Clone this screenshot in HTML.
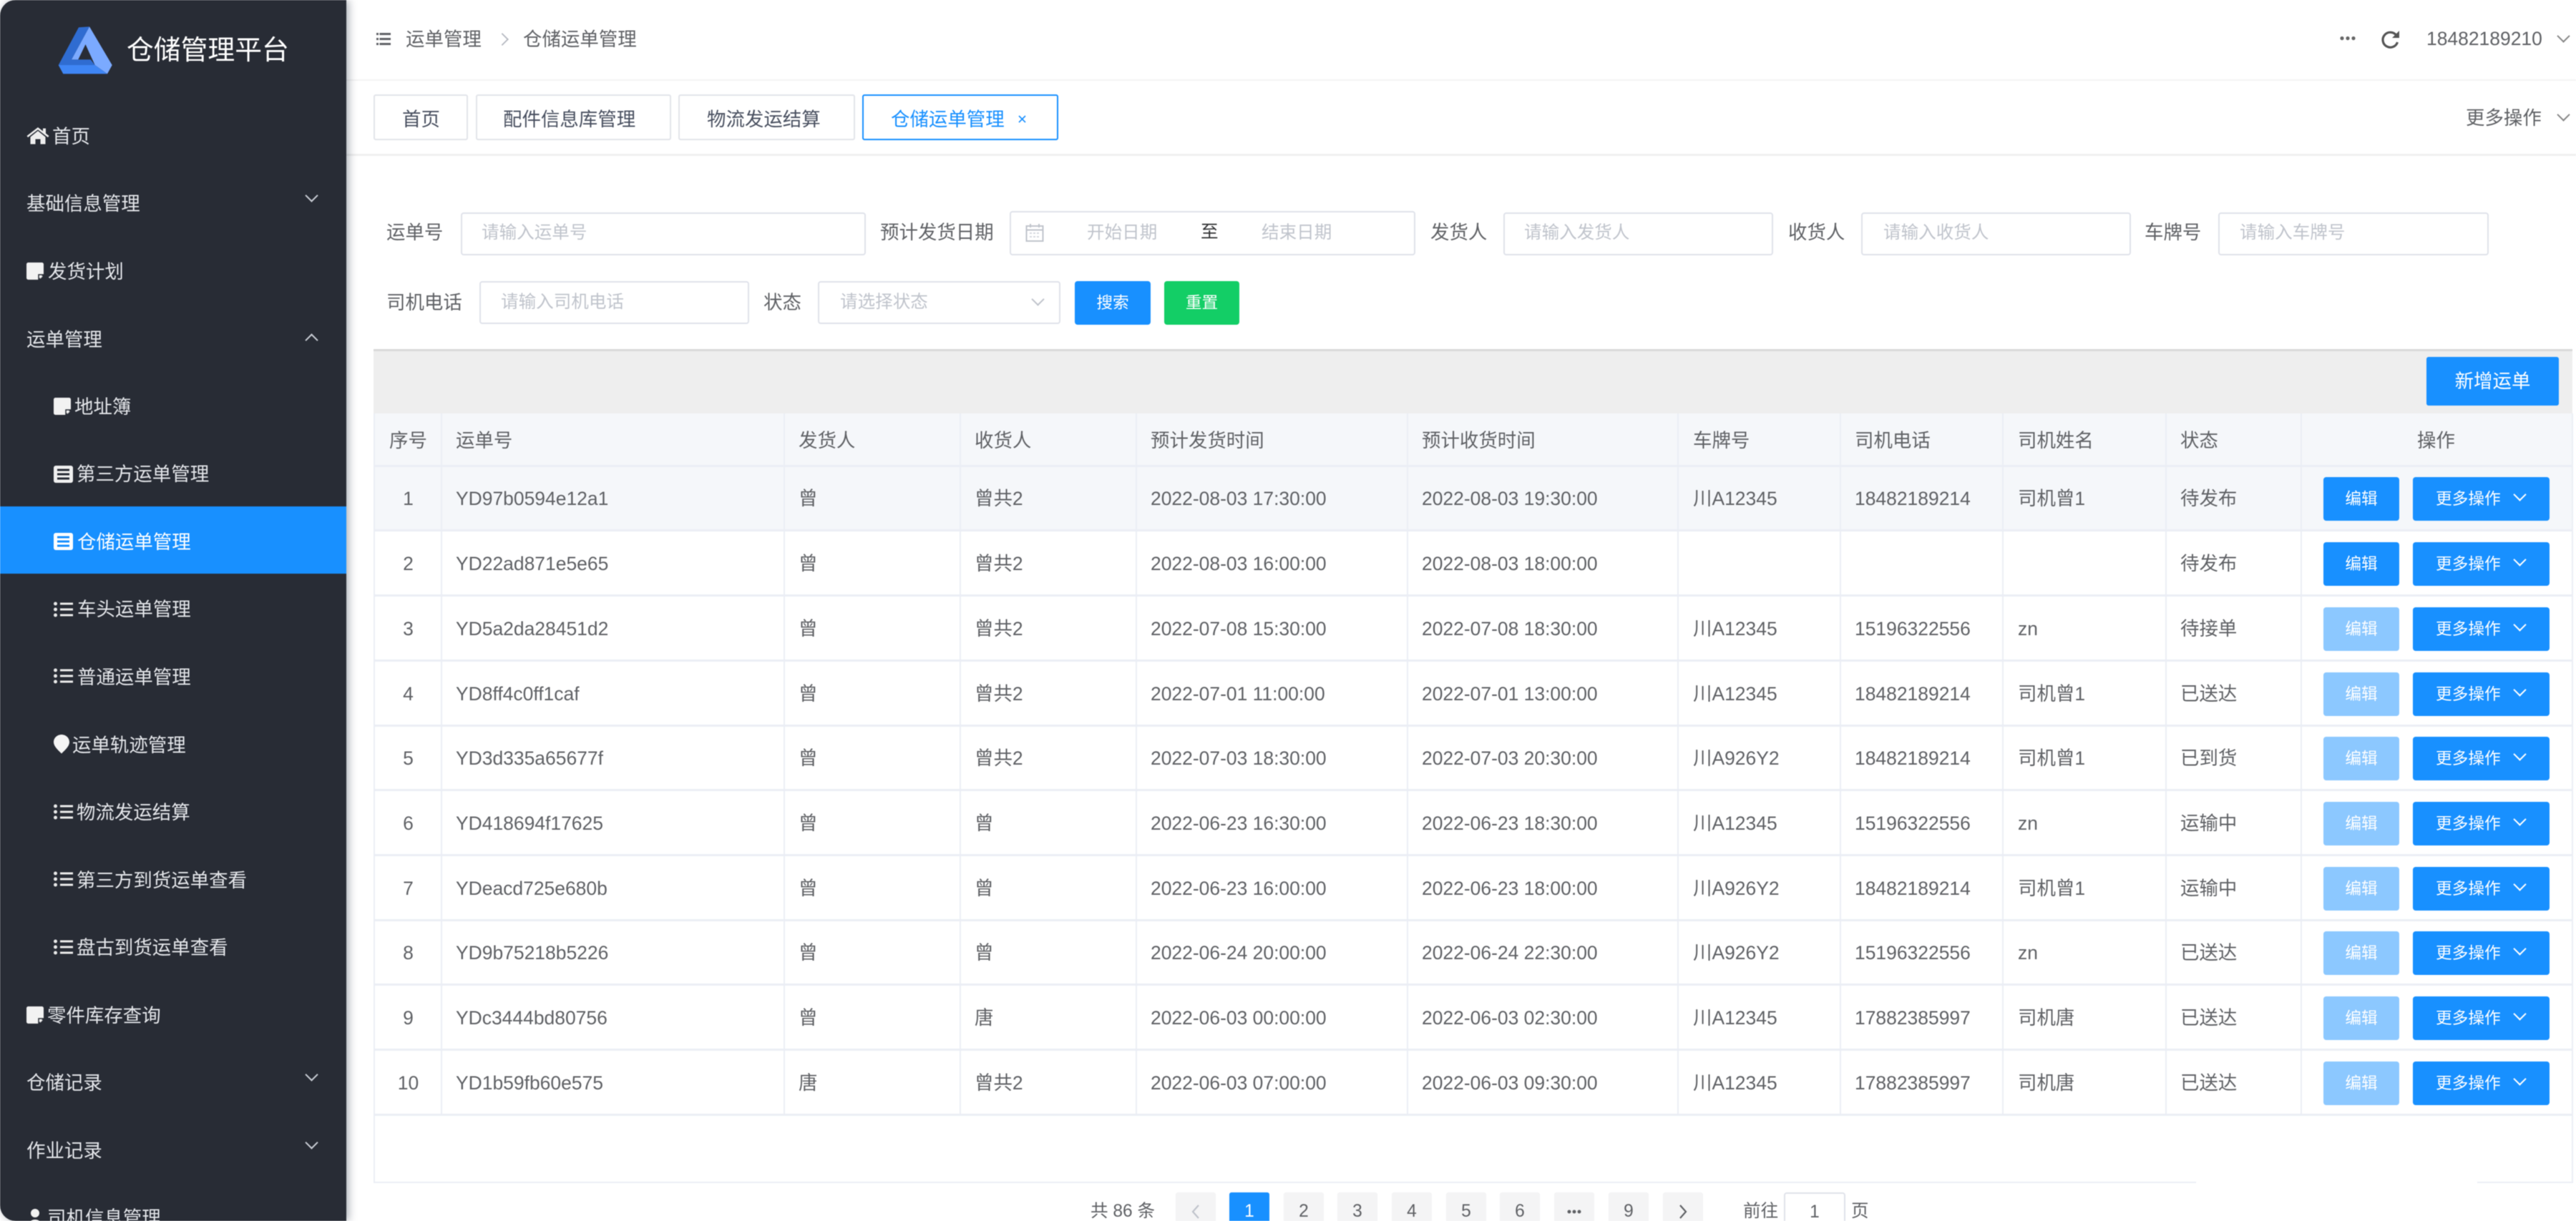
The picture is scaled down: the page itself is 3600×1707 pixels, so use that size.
<!DOCTYPE html>
<html lang="zh-CN">
<head>
<meta charset="utf-8">
<title>仓储运单管理</title>
<style>
html,body{margin:0;padding:0;background:#fff}
body{width:3600px;height:1707px;overflow:hidden;position:relative;font-family:"Liberation Sans","Noto Sans CJK SC",sans-serif;font-size:26.46px;color:#606266}
#w{position:absolute;left:0;top:0;width:3600px;height:1707px;overflow:hidden;filter:blur(.55px);background:#fff}
.a{position:absolute}
.t{position:absolute;white-space:nowrap;line-height:40px;height:40px}
.ch{position:absolute;width:13px;height:13px;border-right:2px solid currentColor;border-bottom:2px solid currentColor;transform:rotate(45deg);box-sizing:border-box}
.up{transform:rotate(225deg)}
#side{left:0;top:0;width:484px;height:1707px;background:#282c35;border-radius:22px 0 0 22px;box-shadow:3px 0 12px rgba(0,21,41,.35);color:#e4e6ea}
#side .t{margin-top:2px}
#side .ch{color:#c8ccd4;left:429px}
.act{left:0;top:708px;width:484px;height:94px;background:#1890ff}
.inp{position:absolute;box-sizing:border-box;border:2px solid #dfe2ea;border-radius:4px;background:#fff;height:60px}
.ph{color:#c0c4cc;font-size:24.57px}
.tab{position:absolute;top:132px;height:64px;box-sizing:border-box;border:2px solid #e2e4ea;border-radius:3px;background:#fff}
.vl{position:absolute;top:578px;height:982px;width:2px;background:#ebeef5}
.r{position:absolute;left:524px;width:3070px;height:91px;border-bottom:3px solid #ebeef5;box-sizing:border-box}
.r .t,.hd .t{top:25px}
.c0{left:0;width:93px;text-align:center}
.c1{left:113px}.c2{left:592px}.c3{left:838px}.c4{left:1084px}.c5{left:1463px}.c6{left:1842px}.c7{left:2068px}.c8{left:2296px}.c9{left:2523px}
.b{position:absolute;top:15px;height:61px;border-radius:4px;background:#1890ff;color:#fff;font-size:22.68px;line-height:61px}
.e{left:2723px;width:106px;text-align:center}
.off{background:#8cc8ff}
.m{left:2848px;width:191px;padding-left:32px;box-sizing:border-box}
.m .ch{left:143px;top:18px;color:#fff}
.p{position:absolute;top:1667px;width:56px;height:53px;background:#f4f4f5;border-radius:3px;text-align:center;line-height:54px;font-size:24.57px}
.p svg{position:absolute;left:21px;top:16px}
</style>
</head>
<body>
<div id="w">

<!-- top lines -->
<div class="a" style="left:484px;top:111px;width:3116px;height:2px;background:#f3f3f3"></div>
<div class="a" style="left:484px;top:215px;width:3116px;height:3px;background:#f0f0f0"></div>

<!-- header -->
<svg class="a" style="left:526px;top:46px" width="20" height="17" viewBox="0 0 20 17"><path d="M0 0h3v3H0zM4.500 0H20v3H4.500zM0 7h3v3H0zM4.500 7H20v3H4.500zM0 14h3v3H0zM4.500 14H20v3H4.500z" fill="#606266"/></svg>
<span class="t" style="left:567px;top:35px">运单管理</span>
<span class="a" style="left:695px;top:48px;width:12px;height:12px;border-right:2px solid #b4b8c0;border-top:2px solid #b4b8c0;transform:rotate(45deg) scale(.9)"></span>
<span class="t" style="left:731px;top:35px">仓储运单管理</span>

<svg class="a" style="left:3270px;top:49px" width="22" height="9" viewBox="0 0 22 9"><circle cx="3" cy="4.500" r="2.600" fill="#666"/><circle cx="11" cy="4.500" r="2.600" fill="#666"/><circle cx="19" cy="4.500" r="2.600" fill="#666"/></svg>
<svg class="a" style="left:3328px;top:41px" width="26" height="27" viewBox="0 0 26 27"><path d="M21 8.500A10.500 10.500 0 1 0 22.500 18" fill="none" stroke="#555" stroke-width="3.200"/><path d="M25 2v10H15z" fill="#555"/></svg>
<span class="t" style="left:3391px;top:34px">18482189210</span>
<span class="ch" style="left:3576px;top:44px;color:#888"></span>
<span class="t" style="left:3446px;top:145px">更多操作</span>
<span class="ch" style="left:3576px;top:154px;color:#888"></span>

<!-- tabs -->
<div class="tab" style="left:522px;width:132px"></div><span class="t" style="left:562px;top:147px;color:#495060">首页</span>
<div class="tab" style="left:665px;width:273px"></div><span class="t" style="left:703px;top:147px;color:#495060">配件信息库管理</span>
<div class="tab" style="left:948px;width:247px"></div><span class="t" style="left:988px;top:147px;color:#495060">物流发运结算</span>
<div class="tab" style="left:1205px;width:274px;border-color:#1890ff"></div><span class="t" style="left:1245px;top:147px;color:#1890ff">仓储运单管理</span>
<svg class="a" style="left:1422px;top:160px" width="13" height="13" viewBox="0 0 13 13"><path d="M2 2l9 9M11 2l-9 9" stroke="#1890ff" stroke-width="1.600"/></svg>

<!-- search row 1 -->
<span class="t" style="left:540px;top:305px">运单号</span>
<div class="inp" style="left:644px;top:297px;width:566px"></div><span class="t ph" style="left:673px;top:306px">请输入运单号</span>
<span class="t" style="left:1230px;top:305px">预计发货日期</span>
<div class="inp" style="left:1411px;top:295px;width:567px;height:62px"></div>
<svg class="a" style="left:1433px;top:312px" width="26" height="26" viewBox="0 0 26 26"><path d="M1.500 4h23v21h-23zM1.500 9.500h23" fill="none" stroke="#c0c4cc" stroke-width="2"/><path d="M7 1v5M19 1v5" stroke="#c0c4cc" stroke-width="2"/><path d="M6 14h14M6 19h14" stroke="#d5d8de" stroke-width="2" stroke-dasharray="3 2"/></svg>
<span class="t ph" style="left:1519px;top:306px">开始日期</span>
<span class="t" style="left:1678px;top:305px;color:#303133;font-size:24.57px">至</span>
<span class="t ph" style="left:1763px;top:306px">结束日期</span>
<span class="t" style="left:1999px;top:305px">发货人</span>
<div class="inp" style="left:2101px;top:297px;width:377px"></div><span class="t ph" style="left:2130px;top:306px">请输入发货人</span>
<span class="t" style="left:2499px;top:305px">收货人</span>
<div class="inp" style="left:2601px;top:297px;width:377px"></div><span class="t ph" style="left:2632px;top:306px">请输入收货人</span>
<span class="t" style="left:2997px;top:305px">车牌号</span>
<div class="inp" style="left:3100px;top:297px;width:378px"></div><span class="t ph" style="left:3130px;top:306px">请输入车牌号</span>

<!-- search row 2 -->
<span class="t" style="left:540px;top:403px">司机电话</span>
<div class="inp" style="left:670px;top:393px;width:377px"></div><span class="t ph" style="left:700px;top:403px">请输入司机电话</span>
<span class="t" style="left:1067px;top:403px">状态</span>
<div class="inp" style="left:1143px;top:393px;width:339px"></div><span class="t ph" style="left:1174px;top:403px">请选择状态</span>
<span class="ch" style="left:1444px;top:412px;color:#c0c4cc"></span>
<div class="a" style="left:1502px;top:393px;width:106px;height:61px;background:#1890ff;border-radius:4px;color:#fff;font-size:22.68px;line-height:61px;text-align:center">搜索</div>
<div class="a" style="left:1627px;top:393px;width:105px;height:61px;background:#13ce66;border-radius:4px;color:#fff;font-size:22.68px;line-height:61px;text-align:center">重置</div>

<!-- table -->
<div class="a" style="left:522px;top:488px;width:3073px;height:90px;background:#eee;border-top:3px solid #d9d9d9;box-sizing:border-box"></div>
<div class="a" style="left:3391px;top:499px;width:185px;height:68px;background:#1890ff;border-radius:3px;color:#fff;line-height:68px;text-align:center">新增运单</div>
<div class="a" style="left:522px;top:578px;width:3073px;height:74px;background:#f5f7fa"></div>
<div class="a" style="left:522px;top:652px;width:3073px;height:91px;background:#f5f7fa"></div>
<div class="a" style="left:522px;top:578px;width:2px;height:1076px;background:#ebeef5"></div>
<div class="a" style="left:3594px;top:578px;width:2px;height:1076px;background:#ebeef5"></div>
<div class="a" style="left:522px;top:1652px;width:2547px;height:2px;background:#ebeef5"></div>
<div class="a" style="left:3462px;top:1652px;width:134px;height:2px;background:#ebeef5"></div>
<div class="a" style="left:524px;top:650px;width:3070px;height:3px;background:#ebeef5"></div>

<div class="a hd" style="left:524px;top:578px;width:3070px;height:74px">
<span class="t" style="top:18px;left:0;width:93px;text-align:center">序号</span>
<span class="t c1" style="top:18px">运单号</span><span class="t c2" style="top:18px">发货人</span><span class="t c3" style="top:18px">收货人</span><span class="t c4" style="top:18px">预计发货时间</span><span class="t c5" style="top:18px">预计收货时间</span><span class="t c6" style="top:18px">车牌号</span><span class="t c7" style="top:18px">司机电话</span><span class="t c8" style="top:18px">司机姓名</span><span class="t c9" style="top:18px">状态</span>
<span class="t" style="top:18px;left:2691px;width:379px;text-align:center">操作</span>
</div>

<div class="r" style="top:652px"><span class="t c0">1</span><span class="t c1">YD97b0594e12a1</span><span class="t c2">曾</span><span class="t c3">曾共2</span><span class="t c4">2022-08-03 17:30:00</span><span class="t c5">2022-08-03 19:30:00</span><span class="t c6">川A12345</span><span class="t c7">18482189214</span><span class="t c8">司机曾1</span><span class="t c9">待发布</span><div class="b e">编辑</div><div class="b m">更多操作<i class="ch"></i></div></div>
<div class="r" style="top:743px"><span class="t c0">2</span><span class="t c1">YD22ad871e5e65</span><span class="t c2">曾</span><span class="t c3">曾共2</span><span class="t c4">2022-08-03 16:00:00</span><span class="t c5">2022-08-03 18:00:00</span><span class="t c9">待发布</span><div class="b e">编辑</div><div class="b m">更多操作<i class="ch"></i></div></div>
<div class="r" style="top:834px"><span class="t c0">3</span><span class="t c1">YD5a2da28451d2</span><span class="t c2">曾</span><span class="t c3">曾共2</span><span class="t c4">2022-07-08 15:30:00</span><span class="t c5">2022-07-08 18:30:00</span><span class="t c6">川A12345</span><span class="t c7">15196322556</span><span class="t c8">zn</span><span class="t c9">待接单</span><div class="b e off">编辑</div><div class="b m">更多操作<i class="ch"></i></div></div>
<div class="r" style="top:924.500px"><span class="t c0">4</span><span class="t c1">YD8ff4c0ff1caf</span><span class="t c2">曾</span><span class="t c3">曾共2</span><span class="t c4">2022-07-01 11:00:00</span><span class="t c5">2022-07-01 13:00:00</span><span class="t c6">川A12345</span><span class="t c7">18482189214</span><span class="t c8">司机曾1</span><span class="t c9">已送达</span><div class="b e off">编辑</div><div class="b m">更多操作<i class="ch"></i></div></div>
<div class="r" style="top:1015px"><span class="t c0">5</span><span class="t c1">YD3d335a65677f</span><span class="t c2">曾</span><span class="t c3">曾共2</span><span class="t c4">2022-07-03 18:30:00</span><span class="t c5">2022-07-03 20:30:00</span><span class="t c6">川A926Y2</span><span class="t c7">18482189214</span><span class="t c8">司机曾1</span><span class="t c9">已到货</span><div class="b e off">编辑</div><div class="b m">更多操作<i class="ch"></i></div></div>
<div class="r" style="top:1106px"><span class="t c0">6</span><span class="t c1">YD418694f17625</span><span class="t c2">曾</span><span class="t c3">曾</span><span class="t c4">2022-06-23 16:30:00</span><span class="t c5">2022-06-23 18:30:00</span><span class="t c6">川A12345</span><span class="t c7">15196322556</span><span class="t c8">zn</span><span class="t c9">运输中</span><div class="b e off">编辑</div><div class="b m">更多操作<i class="ch"></i></div></div>
<div class="r" style="top:1196.500px"><span class="t c0">7</span><span class="t c1">YDeacd725e680b</span><span class="t c2">曾</span><span class="t c3">曾</span><span class="t c4">2022-06-23 16:00:00</span><span class="t c5">2022-06-23 18:00:00</span><span class="t c6">川A926Y2</span><span class="t c7">18482189214</span><span class="t c8">司机曾1</span><span class="t c9">运输中</span><div class="b e off">编辑</div><div class="b m">更多操作<i class="ch"></i></div></div>
<div class="r" style="top:1287px"><span class="t c0">8</span><span class="t c1">YD9b75218b5226</span><span class="t c2">曾</span><span class="t c3">曾</span><span class="t c4">2022-06-24 20:00:00</span><span class="t c5">2022-06-24 22:30:00</span><span class="t c6">川A926Y2</span><span class="t c7">15196322556</span><span class="t c8">zn</span><span class="t c9">已送达</span><div class="b e off">编辑</div><div class="b m">更多操作<i class="ch"></i></div></div>
<div class="r" style="top:1378px"><span class="t c0">9</span><span class="t c1">YDc3444bd80756</span><span class="t c2">曾</span><span class="t c3">唐</span><span class="t c4">2022-06-03 00:00:00</span><span class="t c5">2022-06-03 02:30:00</span><span class="t c6">川A12345</span><span class="t c7">17882385997</span><span class="t c8">司机唐</span><span class="t c9">已送达</span><div class="b e off">编辑</div><div class="b m">更多操作<i class="ch"></i></div></div>
<div class="r" style="top:1469px"><span class="t c0">10</span><span class="t c1">YD1b59fb60e575</span><span class="t c2">唐</span><span class="t c3">曾共2</span><span class="t c4">2022-06-03 07:00:00</span><span class="t c5">2022-06-03 09:30:00</span><span class="t c6">川A12345</span><span class="t c7">17882385997</span><span class="t c8">司机唐</span><span class="t c9">已送达</span><div class="b e off">编辑</div><div class="b m">更多操作<i class="ch"></i></div></div>

<i class="vl" style="left:616px"></i><i class="vl" style="left:1095px"></i><i class="vl" style="left:1341px"></i><i class="vl" style="left:1587px"></i><i class="vl" style="left:1966px"></i><i class="vl" style="left:2344px"></i><i class="vl" style="left:2571px"></i><i class="vl" style="left:2798px"></i><i class="vl" style="left:3026px"></i><i class="vl" style="left:3215px"></i>

<!-- pagination -->
<span class="t" style="left:1524px;top:1674px;font-size:24.57px">共 86 条</span>
<div class="p" style="left:1643px"><svg width="14" height="22" viewBox="0 0 14 22"><path d="M11 2L3 11l8 9" fill="none" stroke="#c0c4cc" stroke-width="2.200"/></svg></div>
<div class="p" style="left:1718px;background:#1890ff;color:#fff">1</div>
<div class="p" style="left:1794px">2</div>
<div class="p" style="left:1869px">3</div>
<div class="p" style="left:1945px">4</div>
<div class="p" style="left:2021px">5</div>
<div class="p" style="left:2096px">6</div>
<div class="p" style="left:2172px"><svg style="left:18px;top:23px" width="20" height="8" viewBox="0 0 20 8"><circle cx="3" cy="4" r="2.500" fill="#606266"/><circle cx="10" cy="4" r="2.500" fill="#606266"/><circle cx="17" cy="4" r="2.500" fill="#606266"/></svg></div>
<div class="p" style="left:2248px">9</div>
<div class="p" style="left:2324px"><svg width="14" height="22" viewBox="0 0 14 22"><path d="M3 2l8 9-8 9" fill="none" stroke="#606266" stroke-width="2.200"/></svg></div>
<span class="t" style="left:2436px;top:1674px;font-size:24.57px">前往</span>
<div class="inp" style="left:2493px;top:1667px;width:86px;height:60px;text-align:center;line-height:52px;font-size:24.57px">1</div>
<span class="t" style="left:2587px;top:1674px;font-size:24.57px">页</span>

<!-- sidebar -->
<div class="a" id="side">
<svg class="a" style="left:0;top:0" width="180" height="120" viewBox="0 0 180 120">
<polygon points="110,38.300 125,37.300 100,83.300 126.700,83.300 132.700,91 81.700,91" fill="#2f6cd1"/>
<polygon points="125,37.300 156.700,91 150,103.300 132.700,91 119.500,62 109.300,83.300 100,83.300" fill="#7baaff"/>
<polygon points="81.700,91 132.700,91 150,103.300 88.300,103.300" fill="#3f86f5"/>
</svg>
<span class="t" style="left:177px;top:46px;height:46px;line-height:46px;font-size:37.800px;color:#fff">仓储管理平台</span>

<!-- home -->
<svg class="a" style="left:37px;top:177px" width="32" height="25" viewBox="0 0 32 25"><path d="M16 6L5.500 14.500V24.500h7v-7h7v7h7V14.500z" fill="#eee"/><path d="M0.500 13L16 1l7 5.400V2.500h4v7l4.500 3.500-1.600 2L16 4.200 2.100 15z" fill="#eee"/></svg>
<span class="t" style="left:73px;top:169px">首页</span>

<span class="t" style="left:37px;top:263px">基础信息管理</span><i class="ch" style="top:267px"></i>

<svg class="a" style="left:37px;top:367px" width="24" height="24" viewBox="0 0 24 24"><rect width="24" height="24" rx="2.500" fill="#f2f2f2"/><path d="M24 16l-8 8h8z" fill="#282c35"/><path d="M17 23.500V17h6.500" fill="none" stroke="#282c35" stroke-width="1.500"/><path d="M19 23v-4h4z" fill="#f2f2f2"/></svg>
<span class="t" style="left:67px;top:358px">发货计划</span>

<span class="t" style="left:37px;top:453px">运单管理</span><i class="ch up" style="top:469px"></i>

<svg class="a" style="left:75px;top:556px" width="24" height="24" viewBox="0 0 24 24"><rect width="24" height="24" rx="2.500" fill="#f2f2f2"/><path d="M24 16l-8 8h8z" fill="#282c35"/><path d="M17 23.500V17h6.500" fill="none" stroke="#282c35" stroke-width="1.500"/><path d="M19 23v-4h4z" fill="#f2f2f2"/></svg>
<span class="t" style="left:104px;top:547px">地址簿</span>

<svg class="a" style="left:75px;top:651px" width="27" height="24" viewBox="0 0 27 24"><rect width="27" height="24" rx="3" fill="#f0f0f0"/><path d="M5 6h17M5 12h17M5 18h17" stroke="#282c35" stroke-width="3"/></svg>
<span class="t" style="left:107px;top:641px">第三方运单管理</span>

<div class="a act"></div>
<svg class="a" style="left:75px;top:745px" width="27" height="24" viewBox="0 0 27 24"><rect width="27" height="24" rx="3" fill="#fff"/><path d="M5 6h17M5 12h17M5 18h17" stroke="#1890ff" stroke-width="3"/></svg>
<span class="t" style="left:108px;top:736px;color:#fff">仓储运单管理</span>

<svg class="a" style="left:75px;top:841px" width="27" height="22" viewBox="0 0 27 22"><g fill="#e8e8e8"><circle cx="2.500" cy="3" r="2.500"/><circle cx="2.500" cy="11" r="2.500"/><circle cx="2.500" cy="19" r="2.500"/><rect x="9" y="1.500" width="18" height="3"/><rect x="9" y="9.500" width="18" height="3"/><rect x="9" y="17.500" width="18" height="3"/></g></svg>
<span class="t" style="left:108px;top:830px">车头运单管理</span>

<svg class="a" style="left:75px;top:934px" width="27" height="22" viewBox="0 0 27 22"><g fill="#e8e8e8"><circle cx="2.500" cy="3" r="2.500"/><circle cx="2.500" cy="11" r="2.500"/><circle cx="2.500" cy="19" r="2.500"/><rect x="9" y="1.500" width="18" height="3"/><rect x="9" y="9.500" width="18" height="3"/><rect x="9" y="17.500" width="18" height="3"/></g></svg>
<span class="t" style="left:108px;top:925px">普通运单管理</span>

<svg class="a" style="left:75px;top:1027px" width="22" height="27" viewBox="0 0 22 27"><path d="M11 0C5 0 0 4.500 0 10.500c0 6 7 12 11 16 4-4 11-10 11-16C22 4.500 17 0 11 0z" fill="#f5f5f5"/></svg>
<span class="t" style="left:101px;top:1020px">运单轨迹管理</span>

<svg class="a" style="left:75px;top:1124px" width="27" height="22" viewBox="0 0 27 22"><g fill="#e8e8e8"><circle cx="2.500" cy="3" r="2.500"/><circle cx="2.500" cy="11" r="2.500"/><circle cx="2.500" cy="19" r="2.500"/><rect x="9" y="1.500" width="18" height="3"/><rect x="9" y="9.500" width="18" height="3"/><rect x="9" y="17.500" width="18" height="3"/></g></svg>
<span class="t" style="left:107px;top:1114px">物流发运结算</span>

<svg class="a" style="left:75px;top:1218px" width="27" height="22" viewBox="0 0 27 22"><g fill="#e8e8e8"><circle cx="2.500" cy="3" r="2.500"/><circle cx="2.500" cy="11" r="2.500"/><circle cx="2.500" cy="19" r="2.500"/><rect x="9" y="1.500" width="18" height="3"/><rect x="9" y="9.500" width="18" height="3"/><rect x="9" y="17.500" width="18" height="3"/></g></svg>
<span class="t" style="left:107px;top:1209px">第三方到货运单查看</span>

<svg class="a" style="left:75px;top:1313px" width="27" height="22" viewBox="0 0 27 22"><g fill="#e8e8e8"><circle cx="2.500" cy="3" r="2.500"/><circle cx="2.500" cy="11" r="2.500"/><circle cx="2.500" cy="19" r="2.500"/><rect x="9" y="1.500" width="18" height="3"/><rect x="9" y="9.500" width="18" height="3"/><rect x="9" y="17.500" width="18" height="3"/></g></svg>
<span class="t" style="left:107px;top:1303px">盘古到货运单查看</span>

<svg class="a" style="left:37px;top:1407px" width="24" height="24" viewBox="0 0 24 24"><rect width="24" height="24" rx="2.500" fill="#f2f2f2"/><path d="M24 16l-8 8h8z" fill="#282c35"/><path d="M17 23.500V17h6.500" fill="none" stroke="#282c35" stroke-width="1.500"/><path d="M19 23v-4h4z" fill="#f2f2f2"/></svg>
<span class="t" style="left:66px;top:1398px">零件库存查询</span>

<span class="t" style="left:37px;top:1492px">仓储记录</span><i class="ch" style="top:1496px"></i>
<span class="t" style="left:37px;top:1587px">作业记录</span><i class="ch" style="top:1591px"></i>

<svg class="a" style="left:40px;top:1690px" width="18" height="24" viewBox="0 0 18 24"><circle cx="9" cy="6" r="6" fill="#f2f2f2"/><path d="M0 24c0-6 4-9 9-9s9 3 9 9z" fill="#f2f2f2"/></svg>
<span class="t" style="left:66px;top:1681px">司机信息管理</span>
</div>

</div>
</body>
</html>
